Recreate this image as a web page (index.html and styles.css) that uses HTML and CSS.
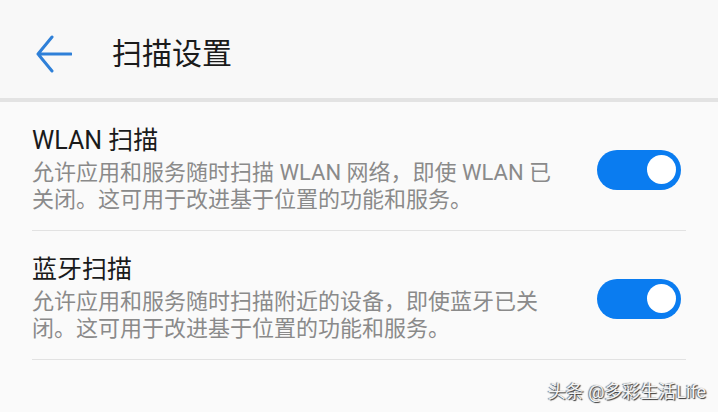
FILE: index.html
```html
<!DOCTYPE html>
<html lang="zh-CN">
<head>
    <meta charset="UTF-8">
    <meta name="viewport" content="width=device-width, initial-scale=1.0">
    <title>扫描设置</title>
    <link rel="stylesheet" href="styles.css">
</head>
<body>
    <header class="topbar">
        <svg class="back" width="36" height="38" viewBox="0 0 36 38">
            <path d="M16 2 L2 19 L16 36 M2 19 L35 19" fill="none" stroke="#2f80d8" stroke-width="3" stroke-linecap="round" stroke-linejoin="round"/>
        </svg>
        <h1>扫描设置</h1>
    </header>

    <main class="list">
        <div class="row">
            <div class="text">
                <div class="title">WLAN 扫描</div>
                <div class="desc">允许应用和服务随时扫描 WLAN 网络，即使 WLAN 已关闭。这可用于改进基于位置的功能和服务。</div>
            </div>
            <div class="switch on"><span class="thumb"></span></div>
        </div>
        <div class="row">
            <div class="text">
                <div class="title">蓝牙扫描</div>
                <div class="desc">允许应用和服务随时扫描附近的设备，即使蓝牙已关闭。这可用于改进基于位置的功能和服务。</div>
            </div>
            <div class="switch on"><span class="thumb"></span></div>
        </div>
    </main>

    <div class="mark">头条 @多彩生活Life</div>
</body>
</html>
```

FILE: styles.css
```css
html, body {
    margin: 0;
    padding: 0;
}
body {
    width: 718px;
    height: 412px;
    overflow: hidden;
    position: relative;
    background-color: #fafafa;
    font-family: Roboto, "Noto Sans CJK SC", sans-serif;
}
.topbar {
    height: 88px;
    padding-top: 10px;
    display: flex;
    align-items: center;
    background-color: #f8f8f8;
    border-bottom: 4px solid #e3e3e3;
}
.back {
    margin-left: 36px;
}
.topbar h1 {
    margin: 0 0 0 40px;
    font-size: 30px;
    font-weight: normal;
    color: #1b1b1b;
    line-height: 40px;
}
.list {
    padding: 0 32px;
}
.row {
    display: flex;
    align-items: center;
    padding: 24px 0 17px;
    border-bottom: 1px solid #e2e2e2;
}
.text {
    width: 530px;
}
.title {
    font-size: 25px;
    line-height: 30px;
    color: #1a1a1a;
}
.desc {
    margin-top: 3px;
    font-size: 22px;
    line-height: 27px;
    color: #8a8a8a;
}
.switch {
    margin-left: auto;
    margin-right: 5px;
    width: 84px;
    height: 40px;
    border-radius: 20px;
    background-color: #d0d0d0;
    display: flex;
    align-items: center;
    box-sizing: border-box;
    padding: 0 5px;
}
.switch.on {
    background-color: #0a7cf0;
    justify-content: flex-end;
}
.thumb {
    width: 29px;
    height: 29px;
    border-radius: 50%;
    background-color: #fff;
}
.mark {
    position: absolute;
    right: 12px;
    bottom: 9px;
    font-size: 18px;
    color: #f4f4f4;
    text-shadow: 1px 1px 1px #333, -1px 0 1px #666;
}
```
